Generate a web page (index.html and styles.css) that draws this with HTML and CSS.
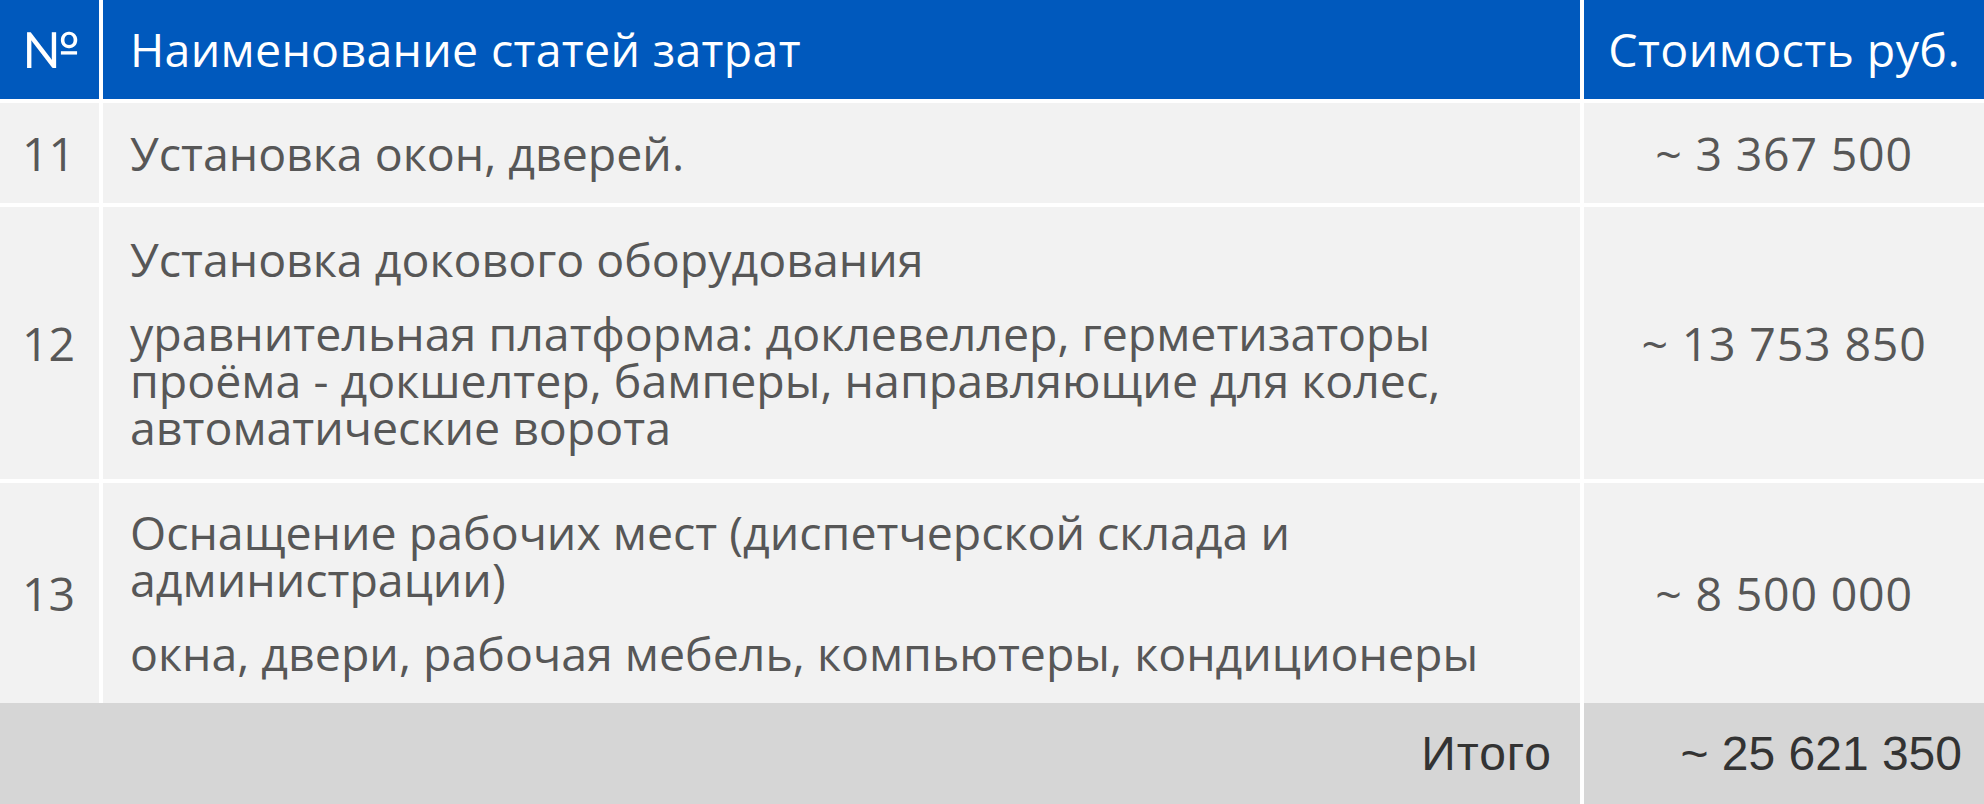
FILE: index.html
```html
<!DOCTYPE html>
<html lang="ru">
<head>
<meta charset="utf-8">
<title>Стоимость</title>
<link rel="stylesheet" href="styles.css">
</head>
<body>
<div class="table">
  <div class="cell head num"><span class="numero">№</span></div>
  <div class="cell head name">Наименование статей затрат</div>
  <div class="cell head cost">Стоимость руб.</div>

  <div class="cell num">11</div>
  <div class="cell name"><p>Установка окон, дверей.</p></div>
  <div class="cell cost">~ 3 367 500</div>

  <div class="cell num">12</div>
  <div class="cell name">
    <p>Установка докового оборудования</p>
    <p>уравнительная платформа: доклевеллер, герметизаторы проёма - докшелтер, бамперы, направляющие для колес, автоматические ворота</p>
  </div>
  <div class="cell cost">~ 13 753 850</div>

  <div class="cell num">13</div>
  <div class="cell name">
    <p>Оснащение рабочих мест (диспетчерской склада и администрации)</p>
    <p>окна, двери, рабочая мебель, компьютеры, кондиционеры</p>
  </div>
  <div class="cell cost">~ 8 500 000</div>
</div>
<div class="total">
  <div class="cell total-label">Итого</div>
  <div class="cell total-value">~ 25 621 350</div>
</div>
</body>
</html>
```
FILE: styles.css
```css
html, body {
  margin: 0;
  padding: 0;
  background: #ffffff;
}

body {
  width: 1984px;
  font-family: "Open Sans", "Noto Sans", sans-serif;
  color: #575757;
}

.table {
  display: grid;
  grid-template-columns: 99px 1fr 400px;
  grid-template-rows: 99px 100px 272px 220px;
  gap: 4px;
  background: #ffffff;
}

.cell {
  background: #f2f2f2;
  display: flex;
  align-items: center;
  font-size: 46.5px;
  line-height: 47px;
}

.cell p {
  margin: 0;
}

.cell p + p {
  margin-top: 27px;
}

.head {
  background: #0059bd;
  color: #ffffff;
  font-size: 46.5px;
}

.num {
  padding-left: 22px;
}

.numero {
  font-family: "Lato", "Open Sans", sans-serif;
  font-size: 50px;
}

.name {
  flex-direction: column;
  align-items: flex-start;
  justify-content: center;
  padding: 0 20px 0 27px;
}

.head.name {
  letter-spacing: 0.3px;
}

.cost {
  justify-content: center;
  letter-spacing: 0.8px;
}

.head.cost {
  justify-content: flex-end;
  padding-right: 24px;
  letter-spacing: 0.4px;
}

.total {
  display: grid;
  grid-template-columns: 1fr 400px;
  column-gap: 4px;
  height: 101px;
}

.total .cell {
  background: #d6d6d6;
  font-family: "Liberation Sans", Arial, sans-serif;
  font-size: 48px;
  color: #333333;
}

.total-label {
  justify-content: flex-end;
  padding-right: 28px;
  letter-spacing: 1px;
}

.total-value {
  justify-content: flex-end;
  padding-right: 22px;
}
```
